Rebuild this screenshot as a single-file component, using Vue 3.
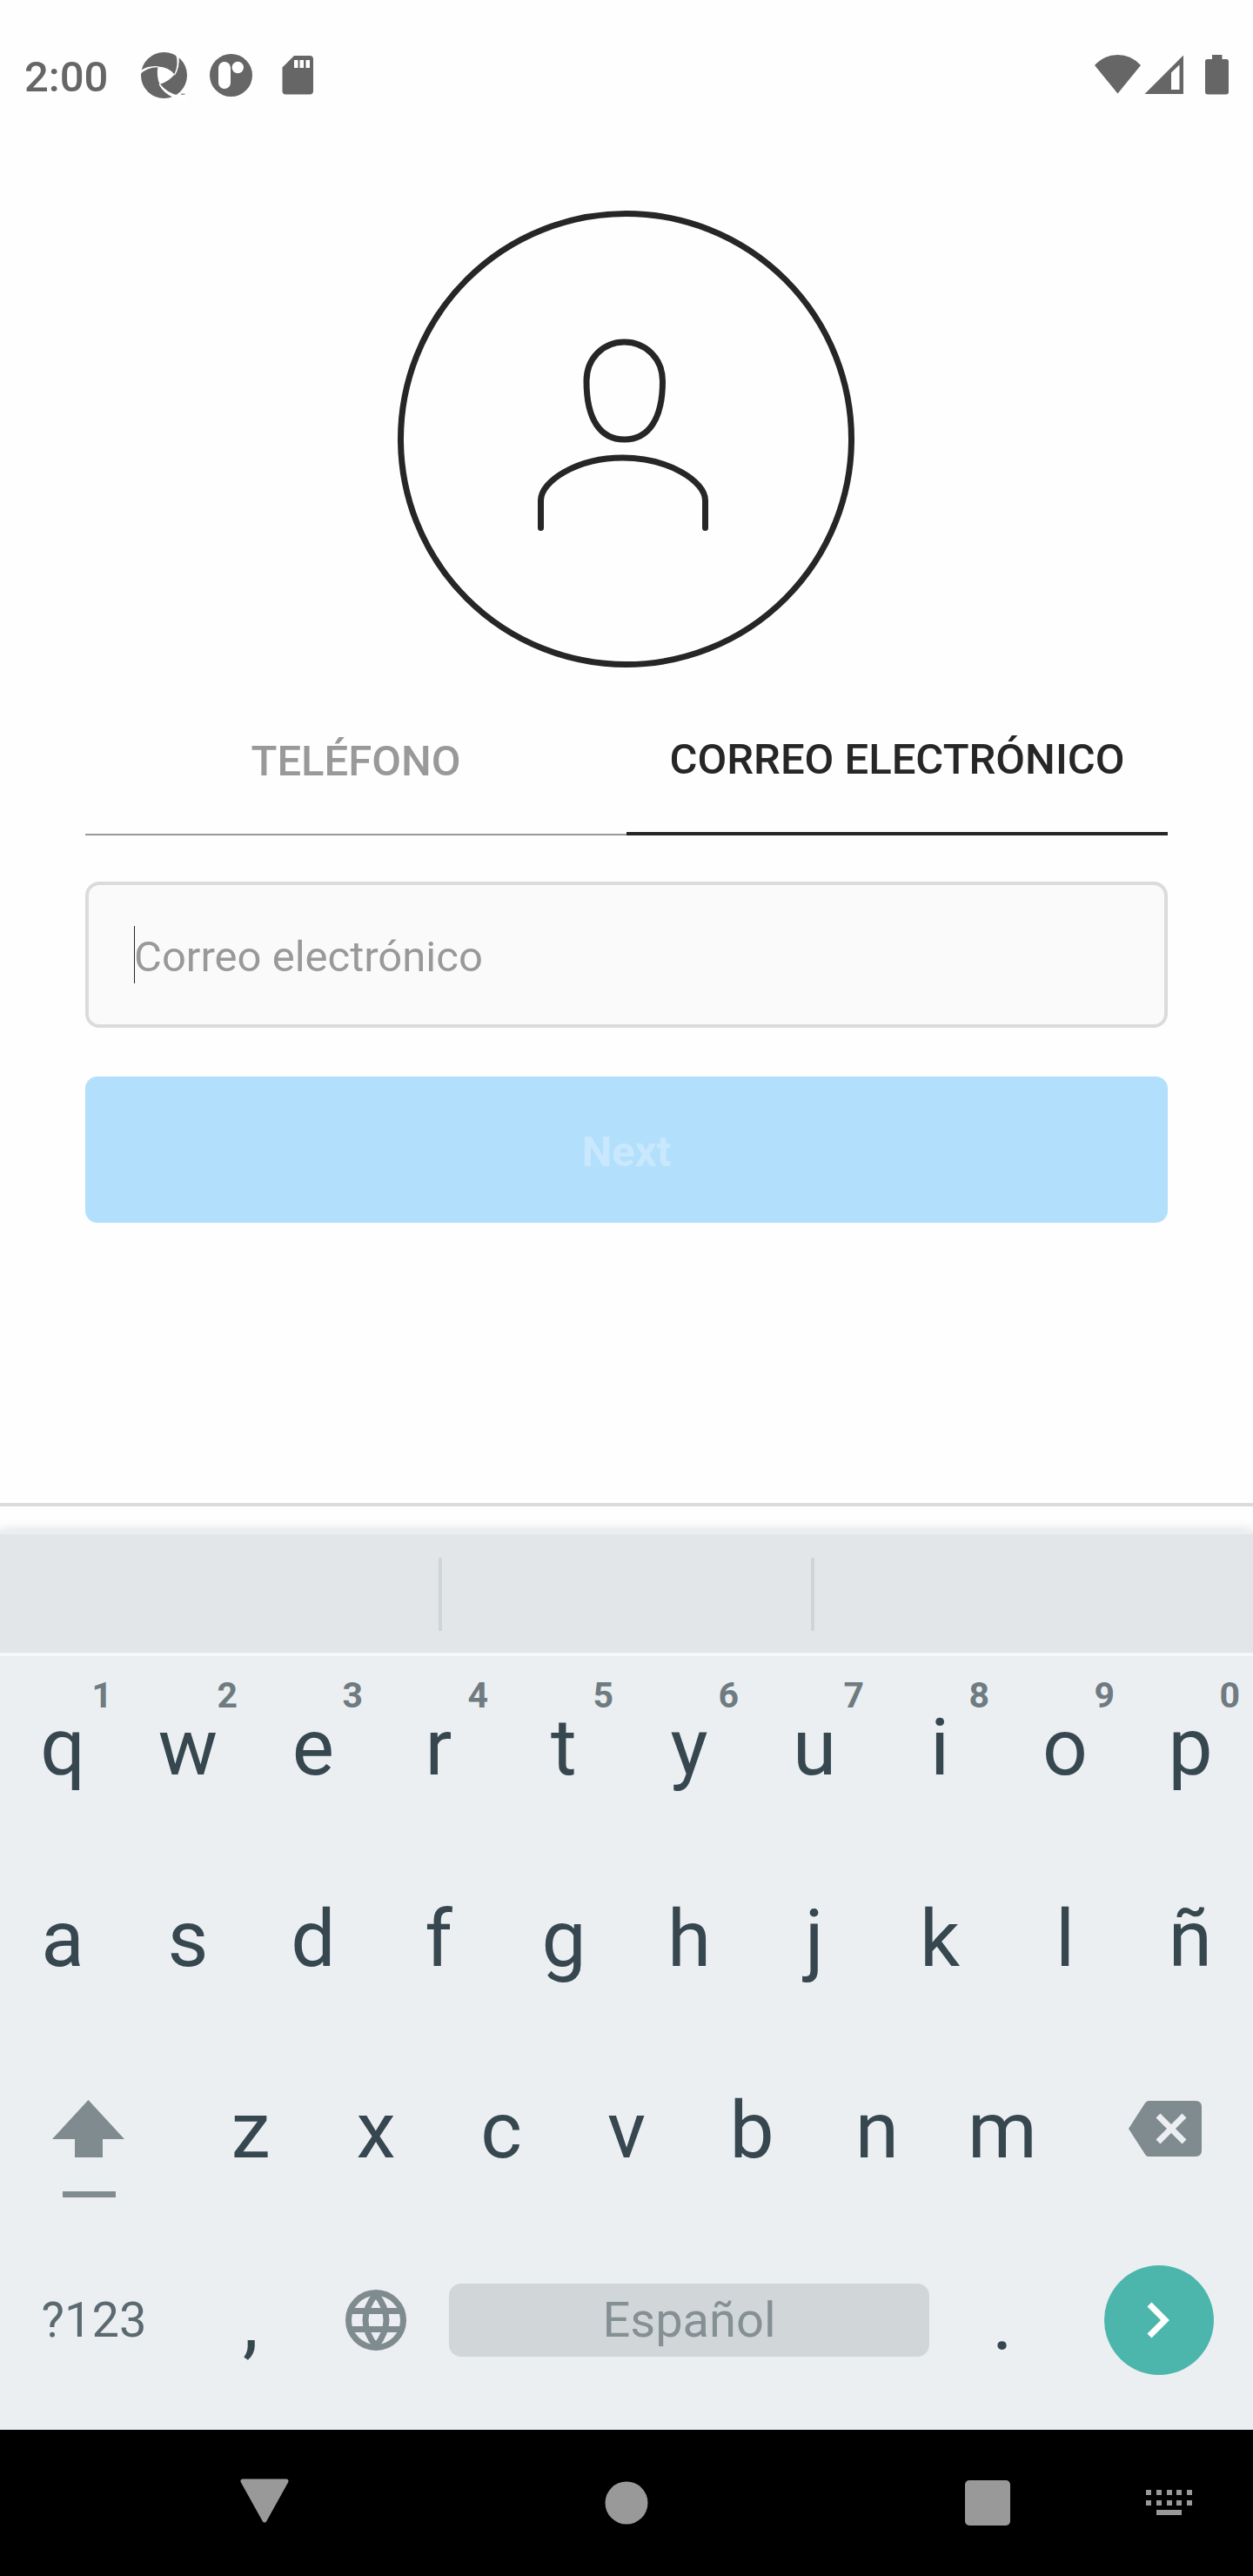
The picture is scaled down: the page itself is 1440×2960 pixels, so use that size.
<script setup>
import { ref } from 'vue'

const email = ref('')

const topRow = [
  ['q', '1'], ['w', '2'], ['e', '3'], ['r', '4'], ['t', '5'],
  ['y', '6'], ['u', '7'], ['i', '8'], ['o', '9'], ['p', '0'],
]
const homeRow = ['a', 's', 'd', 'f', 'g', 'h', 'j', 'k', 'l', 'ñ']
const bottomRow = ['z', 'x', 'c', 'v', 'b', 'n', 'm']
const dots = [0, 12, 24, 35, 47]
</script>

<template>
  <div class="screen">
    <header class="status">
      <div class="status-left">
        <time class="clock">2:00</time>
        <svg class="status-icon" viewBox="160 60 56 56" aria-hidden="true">
          <circle cx="188.500" cy="86.500" r="26.500" fill="#666" />
          <g fill="#fff">
            <path d="M181.500 76.500Q194 77 200.500 85.500Q195 93 183.500 97Q179.500 87 181.500 76.500Z" />
            <path d="M160 82.500Q169 75 182 76.300L182 77.300Q169 77 160 86Z" />
            <path d="M202 62Q206 74 200 86L201 86.500Q207 77 205.500 64Z" />
            <path d="M182.500 97Q188 107 199 112L205 109.500Q192 107 184 96.500Z" />
            <path d="M198 112L206.500 107.500L216 104V116H198Z" />
          </g>
          <path d="M208 107.500h4.500v1.500h-4.500z" fill="#999" />
        </svg>
        <svg class="status-icon" viewBox="237 60 56 56" aria-hidden="true">
          <circle cx="265.500" cy="86.500" r="24.500" fill="#666" />
          <rect x="251" y="71" width="14" height="31" rx="7" fill="#fff" />
          <circle cx="273.300" cy="77.500" r="6.700" fill="#fff" />
        </svg>
        <svg class="status-icon" viewBox="314 60 56 56" aria-hidden="true">
          <path d="M338 64h18a4 4 0 0 1 4 4v36.500a4 4 0 0 1-4 4h-27.500a4 4 0 0 1-4-4V77.500Z" fill="#666" />
          <path d="M338 69h4.500v9H338zM344.500 69h4.500v9h-4.500zM351.500 69h4.500v9h-4.500z" fill="#fff" />
        </svg>
      </div>
      <div class="status-right">
        <svg class="wifi" viewBox="1258 60 54 56" aria-hidden="true">
          <path d="M1258 75Q1269 63 1284.500 63T1311 75L1284.500 107.500Z" fill="#666" />
        </svg>
        <svg class="signal" viewBox="1316 60 44 56" aria-hidden="true">
          <path d="M1360 63.500V108H1315.500ZM1355.500 74.500L1346 83.500V103H1355.500Z" fill="#666" fill-rule="evenodd" />
        </svg>
        <svg class="battery" viewBox="1384 60 28 56" aria-hidden="true">
          <path d="M1393 63h11.500v5h5a2.500 2.500 0 0 1 2.500 2.500v35a3 3 0 0 1-3 3h-21a3 3 0 0 1-3-3v-35a2.500 2.500 0 0 1 2.500-2.500h5.500Z" fill="#666" />
        </svg>
      </div>
    </header>

    <main class="content">
      <svg class="avatar" viewBox="0 0 526 526" fill="none" stroke="#262626" stroke-width="7" stroke-linecap="round" aria-hidden="true">
        <circle cx="262.500" cy="262.500" r="259" />
        <path d="M260.500 151C285 151 304.500 170 304.500 196C304.500 240 288 263 260.500 263C233 263 217 240 217 196C217 170 236 151 260.500 151Z" />
        <path d="M164.500 364.500V333C164.500 311 206 284 258.500 284C311 284 353.500 311 353.500 333V364.500" />
      </svg>

      <div class="tabs" role="tablist">
        <button class="tab" type="button" role="tab" aria-selected="false">TELÉFONO</button>
        <button class="tab active" type="button" role="tab" aria-selected="true">CORREO ELECTRÓNICO</button>
      </div>

      <form class="form" @submit.prevent>
        <div class="field">
          <input v-model="email" class="email" type="email" placeholder="Correo electrónico" aria-label="Correo electrónico" />
          <span class="caret"></span>
        </div>
        <button class="next" type="submit" disabled>Next</button>
      </form>
    </main>

    <div class="footer"></div>

    <section class="keyboard" aria-label="Teclado">
      <div class="suggestions">
        <span></span>
        <span class="middle"></span>
        <span></span>
      </div>
      <div class="row">
        <button v-for="[letter, digit] in topRow" :key="letter" class="key" type="button">
          {{ letter }}<span class="hint">{{ digit }}</span>
        </button>
      </div>
      <div class="row">
        <button v-for="letter in homeRow" :key="letter" class="key" type="button">{{ letter }}</button>
      </div>
      <div class="row">
        <button class="key wide icon-key shift" type="button" aria-label="Mayúsculas">
          <svg width="84" height="160" viewBox="58 2366 84 160" fill="#808b8f">
            <path d="M100.500 2413L142 2458H117V2479H85V2458H59Z" />
            <rect x="71" y="2518" width="61" height="7" />
          </svg>
        </button>
        <button v-for="letter in bottomRow" :key="letter" class="key" type="button">{{ letter }}</button>
        <button class="key wide icon-key erase" type="button" aria-label="Borrar">
          <svg width="84" height="64" viewBox="1297 2414 84 64">
            <path d="M1320 2414H1374Q1381 2414 1381 2421V2471Q1381 2478 1374 2478H1320Q1317.500 2478 1316 2475.500L1297 2446L1316 2416.500Q1317.500 2414 1320 2414Z" fill="#808b8f" />
            <path d="M1331 2431L1361 2461M1361 2431L1331 2461" stroke="#ebeff2" stroke-width="7" />
          </svg>
        </button>
      </div>
      <div class="row">
        <button class="key wide symbols" type="button">?123</button>
        <button class="key" type="button">,</button>
        <button class="key icon-key" type="button" aria-label="Cambiar idioma">
          <svg width="70" height="70" viewBox="0 0 70 70" fill="none" stroke="#808b8f" stroke-width="7">
            <circle cx="35" cy="35" r="31.500" />
            <path d="M6 24.500H64M6 45.500H64" />
            <path d="M35 5Q23 20 23 35T35 65Q47 50 47 35T35 5Z" />
          </svg>
        </button>
        <button class="key space" type="button"><span class="bar">Español</span></button>
        <button class="key" type="button">.</button>
        <button class="key wide icon-key" type="button" aria-label="Siguiente">
          <svg width="126" height="126" viewBox="0 0 126 126">
            <circle cx="63" cy="63" r="63" fill="#4db6ac" />
            <path d="M52 45L70 63L52 81" fill="none" stroke="#fff" stroke-width="7" />
          </svg>
        </button>
      </div>
    </section>

    <nav class="navbar" aria-label="Sistema">
      <button class="nav-button back" type="button" aria-label="Atrás">
        <svg width="56" height="56" viewBox="0 0 56 56"><path d="M3 3H53L28 48Z" fill="#999" stroke="#999" stroke-width="5" stroke-linejoin="round" /></svg>
      </button>
      <button class="nav-button home" type="button" aria-label="Inicio">
        <svg width="56" height="56" viewBox="0 0 56 56"><circle cx="28" cy="28" r="24.500" fill="#999" /></svg>
      </button>
      <button class="nav-button recents" type="button" aria-label="Recientes">
        <svg width="56" height="56" viewBox="0 0 56 56"><rect x="1" y="2" width="52" height="52" rx="5" fill="#999" /></svg>
      </button>
      <button class="nav-button switcher" type="button" aria-label="Cambiar teclado">
        <svg width="56" height="56" viewBox="0 0 56 56" fill="#999">
          <template v-for="x in dots" :key="x">
            <rect :x="x + 1" y="13" width="6" height="6" />
            <rect :x="x + 1" y="25" width="6" height="6" />
          </template>
          <rect x="13" y="36" width="29" height="6" />
        </svg>
      </button>
    </nav>
  </div>
</template>

<style>
body {
  margin: 0;
  background: #fff;
}
</style>

<style scoped>
.screen {
  display: flex;
  flex-direction: column;
  min-height: 100vh;
  background: #fefefe;
  color: #262626;
  font-family: Roboto, "Liberation Sans", sans-serif;
}

.screen *,
.screen {
  box-sizing: border-box;
}

button,
input {
  margin: 0;
  padding: 0;
  border: 0;
  background: none;
  color: inherit;
  font: inherit;
}

svg {
  display: block;
  flex: none;
}

.status {
  display: flex;
  align-items: center;
  justify-content: space-between;
  height: 176px;
  padding: 0 28px;
}

.status-left,
.status-right {
  display: flex;
  align-items: center;
}

.status-left {
  gap: 21px;
}

.clock {
  width: 111px;
  color: #666;
  font-size: 49px;
  font-weight: 500;
}

.status-icon {
  width: 56px;
  height: 56px;
}

.wifi {
  width: 54px;
  height: 56px;
  margin-right: 4px;
}

.signal {
  width: 44px;
  height: 56px;
  margin-right: 24px;
}

.battery {
  width: 28px;
  height: 56px;
}

.content {
  display: flex;
  flex: 1;
  flex-direction: column;
  padding: 66px 98px 0;
}

.avatar {
  align-self: center;
  width: 526px;
  height: 526px;
}

.tabs {
  display: flex;
  margin-top: 22px;
}

.tab {
  flex: 1 0 0;
  height: 170px;
  border-bottom: 2px solid #999;
  color: #999;
  font-size: 49px;
  font-weight: 500;
}

.tab.active {
  padding-bottom: 2px;
  border-bottom: 4px solid #262626;
  color: #262626;
}

.form {
  display: flex;
  flex-direction: column;
  gap: 56px;
  margin-top: 53px;
}

.field {
  position: relative;
  display: flex;
}

.email {
  width: 100%;
  height: 168px;
  padding: 4px 52px 0;
  border: 4px solid #dbdbdb;
  border-radius: 16px;
  background: #fafafa;
  font-size: 49px;
}

.email::placeholder {
  color: #999;
  opacity: 1;
}

.caret {
  position: absolute;
  top: 51px;
  left: 56px;
  width: 1px;
  height: 66px;
  background: #262626;
}

.next {
  height: 168px;
  padding-top: 4px;
  border-radius: 14px;
  background: #b2dffc;
  color: #c9e8fd;
  font-size: 49px;
  font-weight: 700;
}

.footer {
  height: 32px;
  border-top: 4px solid #dbdbdb;
}

.keyboard {
  padding-bottom: 9px;
  background: #ebeff2;
  box-shadow: 0 0 14px rgba(0, 0, 0, 0.15);
}

.suggestions {
  display: grid;
  grid-template-columns: 35fr 30fr 35fr;
  height: 144px;
  padding: 27px 0 25px;
  border-top: 4px solid #eceef0;
  border-bottom: 4px solid #f5f7f8;
  background: #e2e6e9;
}

.middle {
  border-right: 4px solid #cfd4d7;
  border-left: 4px solid #cfd4d7;
}

.row {
  display: grid;
  grid-template-columns: repeat(20, minmax(0, 1fr));
}

.key {
  position: relative;
  display: flex;
  grid-column: span 2;
  align-items: center;
  justify-content: center;
  height: 220px;
  padding-bottom: 10px;
  color: #37474f;
  font-size: 91px;
  line-height: 106px;
}

.wide {
  grid-column: span 3;
}

.icon-key {
  padding-bottom: 14px;
}

.shift {
  padding-right: 14px;
}

.erase {
  padding-left: 14px;
}

.hint {
  position: absolute;
  top: 25px;
  right: 15px;
  color: #6f7b81;
  font-size: 41px;
  font-weight: 700;
  line-height: 40px;
}

.symbols {
  padding-bottom: 14px;
  color: #5a6a70;
  font-size: 56px;
}

.space {
  grid-column: span 8;
  padding: 0 12px 14px;
}

.bar {
  width: 100%;
  height: 84px;
  border-radius: 14px;
  background: #d1d6d9;
  color: #859094;
  font-size: 56px;
  line-height: 84px;
}

.navbar {
  display: grid;
  grid-template-columns: 13fr 12fr 14fr 12fr 14fr 12fr 1fr 12fr;
  height: 168px;
  background: #000;
}

.nav-button {
  display: flex;
  align-items: center;
  justify-content: center;
}

.back {
  grid-column: 2;
}

.home {
  grid-column: 4;
}

.recents {
  grid-column: 6;
}

.switcher {
  grid-column: 8;
}
</style>
